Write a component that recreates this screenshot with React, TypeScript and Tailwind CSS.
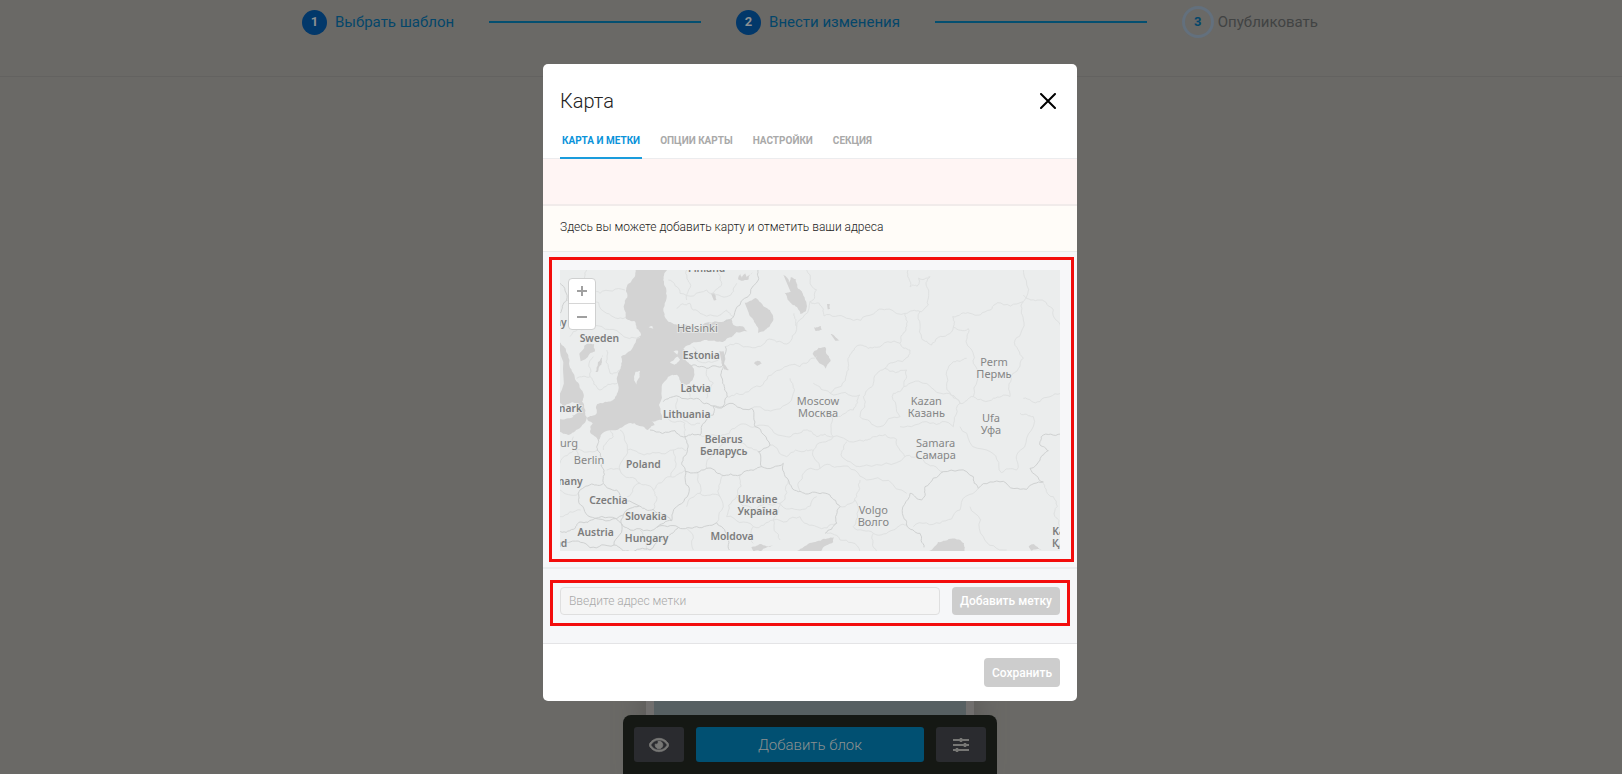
import { FaRegEye } from 'react-icons/fa';

type Point = [number, number];

const steps = [
  { id: 1, label: 'Выбрать шаблон', state: 'done' },
  { id: 2, label: 'Внести изменения', state: 'done' },
  { id: 3, label: 'Опубликовать', state: 'next' },
];

const tabs = ['Карта и метки', 'Опции карты', 'Настройки', 'Секция'];

// Map geometry, three units per pixel
const seas: Point[][] = [
  [
    [288, 55], [276, 90], [262, 104], [262, 142], [252, 165], [256, 203], [284, 214], [290, 236], [303, 256], [282, 284],
    [243, 320], [239, 360], [234, 402], [224, 446], [200, 456], [172, 462], [170, 490], [140, 505], [108, 540], [84, 555],
    [55, 545], [55, 505], [100, 500], [70, 480], [55, 440], [55, 275], [78, 300], [88, 335], [104, 380], [130, 430],
    [126, 455], [136, 480], [142, 508], [158, 520], [150, 545], [175, 572], [182, 556], [240, 534], [284, 520], [322, 540],
    [345, 525], [335, 514], [366, 510], [365, 420], [384, 380], [410, 374], [424, 400], [440, 406], [458, 390], [456, 346],
    [436, 330], [430, 296], [450, 284], [500, 270], [545, 276], [570, 262], [590, 246], [622, 244], [610, 230], [582, 226],
    [575, 208], [545, 216], [470, 236], [420, 228], [386, 216], [373, 190], [378, 130], [370, 90], [384, 55],
  ],
  [[614, 158], [646, 144], [668, 165], [690, 180], [700, 205], [686, 232], [655, 250], [642, 215], [626, 188]],
  [[730, 74], [748, 98], [752, 82], [768, 88], [772, 112], [788, 130], [798, 182], [781, 192], [764, 166], [744, 150], [734, 128], [752, 126]],
  [[538, 302], [552, 304], [552, 338], [566, 360], [552, 358], [544, 332]],
  [[118, 312], [134, 286], [162, 282], [165, 304], [146, 316], [122, 334]],
  [[166, 366], [174, 336], [189, 314], [184, 344], [172, 366]],
  [[642, 340], [654, 332], [666, 340], [652, 348]],
  [[512, 128], [520, 128], [530, 150], [522, 152]],
  [[594, 88], [602, 70], [606, 84], [616, 68], [620, 82], [638, 66], [626, 88], [604, 92]],
  [[822, 232], [842, 228], [846, 240], [826, 242]],
  [[861, 162], [869, 162], [870, 176], [863, 178]],
  [[872, 252], [884, 258], [898, 272], [886, 272]],
  [[818, 312], [836, 293], [856, 292], [858, 308], [872, 332], [858, 356], [838, 340]],
  [[634, 892], [660, 882], [700, 888], [662, 904], [640, 904]],
  [[762, 905], [800, 886], [842, 872], [882, 862], [880, 876], [842, 905]],
  [[1160, 905], [1194, 876], [1226, 867], [1272, 880], [1275, 905]],
  [[1466, 890], [1482, 882], [1504, 900], [1474, 902]],
];

const islands: Point[][] = [
  [[282, 390], [286, 366], [300, 362], [299, 380], [290, 404]],
  [[390, 338], [412, 320], [420, 328], [404, 344]],
  [[400, 304], [414, 302], [412, 314]],
  [[326, 232], [336, 228], [340, 236]],
  [[55, 515], [76, 498], [112, 490], [124, 470], [96, 456], [72, 470], [55, 455]],
];

const countryBorders: Point[][] = [
  [[175, 570], [172, 600], [185, 650], [190, 698]],
  [[330, 540], [405, 542], [435, 560], [440, 610], [425, 640], [436, 662], [448, 715], [410, 770], [395, 812]],
  [[370, 455], [400, 440], [470, 445], [520, 468], [548, 472]],
  [[435, 560], [480, 555], [490, 520], [520, 495], [520, 468], [570, 460], [635, 475], [645, 530], [690, 585], [655, 605], [665, 650]],
  [[436, 664], [500, 655], [545, 675], [600, 675], [635, 660], [665, 650], [730, 640], [745, 690], [775, 725], [810, 730], [870, 735], [900, 770], [890, 820], [855, 850]],
  [[1152, 892], [1140, 850], [1100, 825], [1090, 800], [1110, 730], [1145, 750], [1155, 710], [1210, 665], [1300, 680], [1315, 715], [1390, 694], [1460, 718], [1510, 696], [1470, 655], [1500, 630], [1525, 602], [1500, 585], [1504, 560], [1562, 552]],
  [[115, 730], [155, 702], [190, 700], [230, 720], [298, 768], [250, 795], [165, 805], [122, 765], [115, 730]],
  [[298, 768], [340, 778], [395, 812], [350, 832], [270, 840], [244, 820], [250, 795]],
  [[55, 844], [100, 838], [120, 816], [165, 805], [244, 820], [222, 885], [150, 893], [90, 876], [55, 880]],
  [[222, 885], [270, 905], [330, 900], [395, 850], [415, 832], [350, 832]],
  [[415, 832], [470, 830], [530, 818], [562, 856], [568, 900]],
  [[456, 346], [500, 355], [545, 350], [556, 290]],
  [[550, 350], [548, 400], [562, 440], [548, 472]],
  [[552, 215], [600, 165], [655, 90], [655, 55]],
  [[60, 190], [80, 150], [60, 100]],
];

const regionBorders: Point[][] = [
  [[810, 155], [838, 160], [852, 198], [920, 205], [1000, 192], [1055, 180], [1095, 190], [1140, 185], [1165, 165], [1160, 110], [1170, 80], [1136, 84], [1132, 108], [1110, 110], [1104, 60]],
  [[1140, 185], [1145, 265], [1175, 285], [1195, 262], [1240, 232], [1285, 236], [1280, 280], [1300, 340], [1300, 440], [1360, 445]],
  [[1240, 232], [1238, 200], [1290, 190], [1350, 180], [1372, 158], [1450, 155], [1450, 55]],
  [[1450, 135], [1500, 150], [1540, 180], [1562, 240]],
  [[1450, 155], [1450, 210], [1425, 270], [1450, 325], [1412, 380], [1410, 440], [1360, 445]],
  [[1095, 190], [1098, 240], [1080, 280], [1110, 300], [1088, 335], [1035, 355], [1000, 400], [970, 440], [960, 500]],
  [[1080, 280], [1010, 292], [960, 285], [928, 320], [920, 372], [870, 430], [820, 400]],
  [[1035, 355], [1100, 360], [1092, 410], [1060, 430], [1080, 500], [1020, 530], [960, 500]],
  [[1280, 325], [1240, 335], [1220, 400], [1260, 460], [1300, 440]],
  [[1092, 410], [1150, 400], [1220, 430], [1260, 460], [1240, 530], [1170, 520], [1080, 530]],
  [[1450, 445], [1500, 455], [1562, 430]],
  [[1440, 490], [1480, 500], [1442, 600], [1430, 660], [1384, 668], [1340, 600], [1260, 530]],
  [[870, 430], [960, 435], [940, 480], [875, 500], [880, 560], [820, 600], [840, 655], [900, 650], [980, 690], [1100, 730]],
  [[880, 560], [960, 570], [1000, 560], [1070, 568], [1094, 620], [980, 645], [905, 620], [920, 575]],
  [[1094, 620], [1150, 630], [1210, 665]],
  [[900, 770], [950, 740], [960, 690]],
  [[945, 750], [940, 830], [1000, 850], [1060, 840], [1100, 825]],
  [[1120, 830], [1200, 820], [1260, 780], [1315, 715]],
  [[1290, 770], [1330, 860], [1400, 900]],
  [[1510, 700], [1540, 740], [1545, 800], [1560, 830]],
  [[1000, 850], [1010, 905]],
  [[860, 850], [900, 870], [960, 905]],
  [[555, 290], [620, 290], [680, 270], [740, 282], [770, 230], [762, 190]],
  [[770, 230], [810, 155], [830, 120], [800, 60]],
  [[562, 440], [590, 430], [660, 410], [720, 360], [780, 350], [830, 320]],
  [[635, 475], [700, 480], [760, 430], [750, 385]],
  [[645, 530], [740, 560], [790, 540], [830, 560], [880, 560]],
  [[690, 585], [740, 620], [800, 600], [820, 600]],
  [[780, 725], [790, 670], [840, 655]],
  [[385, 90], [420, 130], [500, 120], [560, 140], [590, 100]],
  [[410, 175], [450, 160], [480, 190], [560, 180], [580, 200]],
  [[440, 60], [450, 100], [440, 150]],
  [[530, 60], [545, 100], [520, 130]],
  [[140, 60], [140, 100], [180, 130], [255, 120]],
  [[80, 150], [140, 140], [200, 190], [256, 203]],
  [[90, 260], [150, 230], [240, 250], [300, 262]],
  [[160, 320], [150, 380], [180, 420], [232, 400]],
  [[150, 380], [110, 385]],
  [[200, 300], [210, 370], [238, 360]],
  [[460, 290], [470, 330], [540, 325]],
  [[420, 400], [450, 440]],
  [[500, 358], [520, 400], [500, 445]],
  [[412, 445], [420, 500], [480, 520]],
  [[380, 500], [435, 520], [435, 560]],
  [[240, 540], [262, 600], [330, 612], [400, 600], [438, 602]],
  [[190, 600], [220, 560], [210, 540]],
  [[262, 600], [240, 660], [200, 660]],
  [[400, 600], [392, 680], [340, 720], [300, 700], [262, 740]],
  [[240, 660], [300, 700]],
  [[392, 680], [436, 662]],
  [[60, 640], [110, 600], [172, 600]],
  [[60, 720], [115, 730]],
  [[100, 560], [120, 640], [185, 650]],
  [[60, 800], [122, 780]],
  [[340, 778], [350, 740], [340, 720]],
  [[500, 655], [530, 600], [600, 580], [655, 605]],
  [[480, 555], [540, 560], [590, 530], [645, 530]],
  [[440, 770], [480, 730], [470, 665]],
  [[480, 730], [540, 740], [550, 675]],
  [[540, 740], [530, 818]],
  [[600, 675], [590, 740], [640, 780], [720, 760], [745, 690]],
  [[590, 740], [560, 800], [640, 830], [700, 810], [720, 760]],
  [[700, 810], [780, 800], [830, 830], [890, 820]],
  [[720, 760], [780, 780], [830, 740]],
  [[640, 830], [640, 880]],
  [[700, 810], [720, 870]],
  [[300, 840], [320, 900]],
  [[440, 835], [460, 900]],
];

const labels = [
  { lines: ['Finland'], x: 500, y: 65, bold: true },
  { lines: ['Norway'], x: 80, y: 229, bold: true, end: true },
  { lines: ['Sweden'], x: 178, y: 275, bold: true },
  { lines: ['Helsinki'], x: 472, y: 246 },
  { lines: ['Estonia'], x: 484, y: 326, bold: true },
  { lines: ['Latvia'], x: 467, y: 427, bold: true },
  { lines: ['Lithuania'], x: 440, y: 504, bold: true },
  { lines: ['Denmark'], x: 126, y: 487, bold: true, end: true },
  { lines: ['Hamburg'], x: 114, y: 592, end: true },
  { lines: ['Berlin'], x: 147, y: 641 },
  { lines: ['Germany'], x: 128, y: 706, bold: true, end: true },
  { lines: ['Poland'], x: 310, y: 654, bold: true },
  { lines: ['Belarus', 'Беларусь'], x: 551, y: 580, bold: true },
  { lines: ['Czechia'], x: 205, y: 762, bold: true },
  { lines: ['Slovakia'], x: 318, y: 809, bold: true },
  { lines: ['Austria'], x: 167, y: 857, bold: true },
  { lines: ['Hungary'], x: 320, y: 875, bold: true },
  { lines: ['Switzerland'], x: 82, y: 891, bold: true, end: true },
  { lines: ['Ukraine', 'Україна'], x: 653, y: 759, bold: true },
  { lines: ['Moldova'], x: 576, y: 870, bold: true },
  { lines: ['Moscow', 'Москва'], x: 834, y: 465 },
  { lines: ['Kazan', 'Казань'], x: 1159, y: 464 },
  { lines: ['Perm', 'Пермь'], x: 1362, y: 348 },
  { lines: ['Ufa', 'Уфа'], x: 1353, y: 517 },
  { lines: ['Samara', 'Самара'], x: 1187, y: 591 },
  { lines: ['Volgo', 'Волго'], x: 1000, y: 793 },
  { lines: ['Ka', 'Қа'], x: 1556, y: 856, bold: true },
];

// Breaks straight segments into small irregular ones so coasts and borders look natural
function rough(points: Point[], amount: number) {
  let line = points;
  for (let pass = 0; pass < 3; pass++) {
    const next: Point[] = [];
    line.forEach(([x, y], i) => {
      next.push([x, y]);
      const to = line[i + 1];
      if (!to) return;
      const dx = to[0] - x;
      const dy = to[1] - y;
      const shift = Math.sin(x * 12.9 + y * 78.2 + pass) * amount;
      next.push([x + dx / 2 - dy * shift, y + dy / 2 + dx * shift]);
    });
    line = next;
  }
  return line.map(([x, y]) => `${x.toFixed(1)},${y.toFixed(1)}`).join(' ');
}

function Stepper() {
  return (
    <header className="border-b border-[#636260] pt-[6px] pr-0.5 pb-[38px]">
      <ol className="mx-auto flex w-full max-w-[1016px] items-center justify-between">
        {steps.map((step, i) => (
          <li key={step.id} className="contents">
            {i > 0 && <span className="h-[2px] w-[212px] bg-[#044f70]" />}
            <a href={`#step-${step.id}`} className="flex items-center">
              {step.state === 'done' ? (
                <span className="mr-2 flex size-[25px] items-center justify-center rounded-full bg-[#02386a] text-[13px] font-bold text-[#8c9092]">
                  {step.id}
                </span>
              ) : (
                <span className="mr-1 flex size-8 items-center justify-center rounded-full border-[3px] border-[#63707d] text-[13px] font-bold text-[#04466a]">
                  {step.id}
                </span>
              )}
              <span className={step.state === 'done' ? 'text-[#04466a]' : 'text-[#414343]'}>{step.label}</span>
            </a>
          </li>
        ))}
      </ol>
    </header>
  );
}

function WorldMap() {
  return (
    <div className="relative">
      <svg viewBox="60 60 1500 843" className="block w-full bg-[#ebeded]" role="img" aria-label="Карта">
        {seas.map((sea, i) => (
          <polygon key={i} points={rough(sea, 0.12)} fill="#d3d3d3" />
        ))}
        {islands.map((island, i) => (
          <polygon key={i} points={rough(island, 0.1)} fill="#ebeded" />
        ))}
        <g fill="none" strokeLinejoin="round">
          {regionBorders.map((border, i) => (
            <polyline key={i} points={rough(border, 0.16)} stroke="#dfe1e1" strokeWidth="3" />
          ))}
          {countryBorders.map((border, i) => (
            <polyline key={i} points={rough(border, 0.14)} stroke="#cfd1d1" strokeWidth="3" />
          ))}
        </g>
        <g fontFamily="'Noto Sans', sans-serif" stroke="#eceeee" strokeOpacity="0.7" strokeWidth="6" paintOrder="stroke" strokeLinejoin="round">
          {labels.map((label) => (
            <text
              key={label.lines[0]}
              textAnchor={label.end ? 'end' : 'middle'}
              fontSize={label.bold ? 31 : 33}
              fontWeight={label.bold ? 600 : 400}
              fill={label.bold ? '#7b7c7c' : '#858686'}
            >
              {label.lines.map((line, i) => (
                <tspan key={line} x={label.x} y={label.y + i * 36}>
                  {line}
                </tspan>
              ))}
            </text>
          ))}
        </g>
      </svg>
      <div className="absolute top-2 left-2 flex flex-col rounded-sm border border-[#cfd0d0] bg-white">
        <button type="button" aria-label="Увеличить" className="flex h-[25px] w-[26px] items-center justify-center border-b border-[#d6d6d6]">
          <svg viewBox="0 0 12 12" className="size-3" stroke="#a0a0a0" strokeWidth="2">
            <path d="M6 1v10M1 6h10" />
          </svg>
        </button>
        <button type="button" aria-label="Уменьшить" className="flex h-[25px] w-[26px] items-center justify-center">
          <svg viewBox="0 0 12 12" className="size-3" stroke="#a0a0a0" strokeWidth="2">
            <path d="M1 6h10" />
          </svg>
        </button>
      </div>
    </div>
  );
}

function MapDialog() {
  return (
    <section role="dialog" aria-labelledby="dialog-title" className="w-full max-w-[534px] overflow-hidden rounded-[5px] bg-white">
      <div className="flex items-center justify-between px-[17px] pt-[23px]">
        <h1 id="dialog-title" className="text-xl leading-7 font-light text-[#222]">
          Карта
        </h1>
        <button type="button" aria-label="Закрыть" className="mr-1">
          <svg viewBox="0 0 16 16" className="size-4" stroke="#000" strokeWidth="2" strokeLinecap="round">
            <path d="M1 1l14 14M15 1L1 15" />
          </svg>
        </button>
      </div>

      <nav className="flex gap-4 border-b border-[#ececee] px-[17px] pt-3">
        {tabs.map((tab, i) => (
          <button
            key={tab}
            type="button"
            className={
              i === 0
                ? '-mb-px border-b-2 border-[#1a9cdc] px-0.5 pt-[6px] pb-2 text-[10px] leading-4 font-bold tracking-normal text-[#0a93da] uppercase'
                : '-mb-px px-0.5 pt-[6px] pb-[10px] text-[10px] leading-4 font-bold tracking-normal text-[#a9a9a9] uppercase'
            }
          >
            {tab}
          </button>
        ))}
      </nav>

      <div className="h-[47px] border-b-2 border-[#f1ebea] bg-[#fff5f4]" />
      <p className="border-b border-[#ebebeb] bg-[#fffcf8] px-[17px] pt-[11px] pb-[14px] text-xs leading-5 font-light text-[#222]">
        Здесь вы можете добавить карту и отметить ваши адреса
      </p>

      <div className="relative border-b-2 border-[#ebeef0] bg-[#f7f7f9] px-[17px] pt-[18px] pb-4">
        <WorldMap />
        <div className="pointer-events-none absolute top-[5px] right-[3px] bottom-[5px] left-[6px] border-[3px] border-[#f30d0d]" />
      </div>

      <form className="relative flex gap-3 border-b border-[#e4e4e6] bg-[#f6f7f9] px-[17px] pt-[18px] pb-7">
        <label htmlFor="marker-address" className="sr-only">
          Введите адрес метки
        </label>
        <input
          id="marker-address"
          type="text"
          placeholder="Введите адрес метки"
          className="h-7 min-w-0 flex-1 rounded-sm border border-[#dfdfdf] bg-[#f5f5f5] px-2 text-xs placeholder:font-light placeholder:text-[#a9a9a9]"
        />
        <button type="button" className="h-7 rounded-sm bg-[#cdcdcd] px-2 text-xs font-medium text-white">
          Добавить метку
        </button>
        <div className="pointer-events-none absolute inset-x-[7px] top-[11px] bottom-[17px] border-[3px] border-[#f30d0d]" />
      </form>

      <div className="flex justify-end px-[17px] pt-[14px] pb-[14px]">
        <button type="button" className="h-[29px] rounded-sm bg-[#cdcdcd] px-2 text-xs font-medium text-white">
          Сохранить
        </button>
      </div>
    </section>
  );
}

function Toolbar() {
  return (
    <div className="flex w-full max-w-[374px] items-center gap-3 rounded-t-lg bg-[#151814] px-[11px] py-3">
      <button type="button" aria-label="Просмотр" className="flex h-[35px] w-[50px] items-center justify-center rounded-[3px] bg-[#2a2b2f] text-[#777775]">
        <FaRegEye className="size-5" stroke="currentColor" strokeWidth={20} />
      </button>
      <button type="button" className="h-[35px] flex-1 rounded-[3px] bg-[#015072] text-[15px] font-light text-[#8b9190]">
        Добавить блок
      </button>
      <button type="button" aria-label="Параметры" className="flex h-[35px] w-[50px] items-center justify-center rounded-[3px] bg-[#2a2b2f]">
        <svg viewBox="0 0 16 14" className="h-[14px] w-4" stroke="#777775" strokeWidth="2">
          <path d="M0 2h16M0 7h16M0 12h16" />
          <path d="M8 0v4M12 5v4M4 10v4" strokeWidth="2.5" />
        </svg>
      </button>
    </div>
  );
}

export default function App() {
  return (
    <div className="relative min-h-screen overflow-hidden bg-[#6a6966] font-[Roboto,sans-serif] text-[15px] leading-5">
      <Stepper />
      <div className="absolute inset-0 flex items-end justify-center pr-0.5">
        <div className="h-[90px] w-[328px] border-x-8 border-[#716f6e] bg-[#576062] shadow-[0_0_30px_#575654]" />
      </div>
      <div className="absolute inset-0 flex flex-col items-center justify-between pt-16 pr-0.5">
        <MapDialog />
        <Toolbar />
      </div>
    </div>
  );
}
